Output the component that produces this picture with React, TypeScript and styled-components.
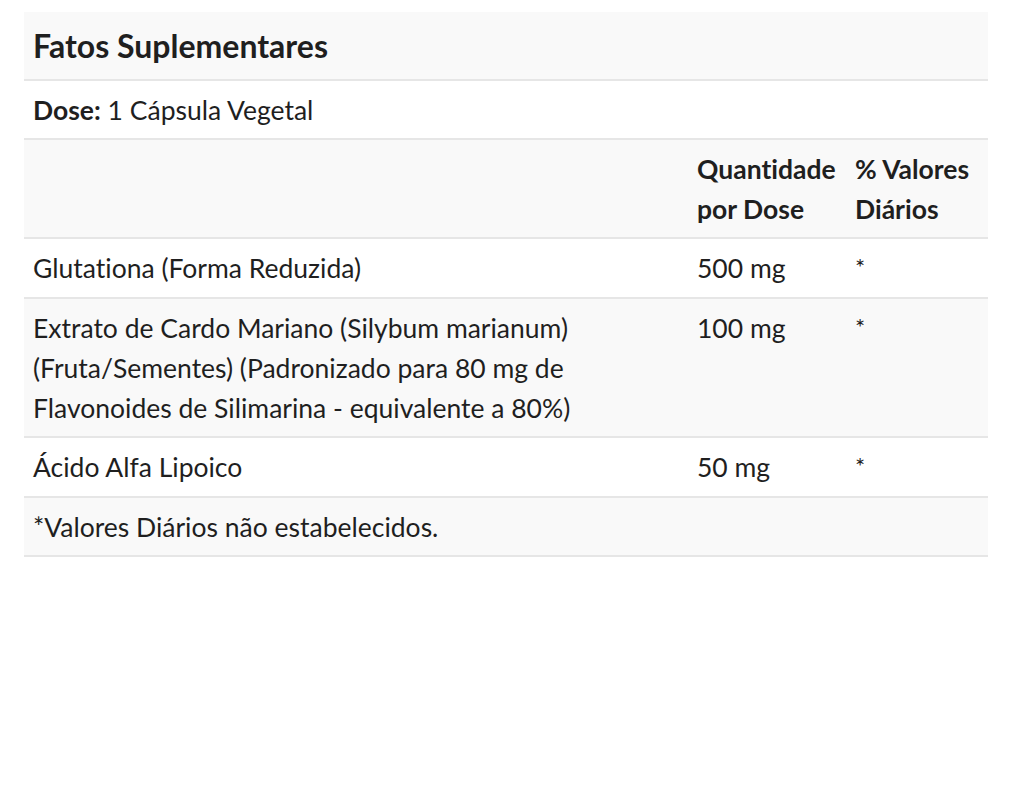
import React from "react";
import styled, { createGlobalStyle } from "styled-components";

const GlobalStyle = createGlobalStyle`
  body {
    margin: 0;
    background: #ffffff;
    font-family: Lato, "Open Sans", sans-serif;
    color: #1f1f1f;
    font-variant-ligatures: none;
  }
`;

interface Ingredient {
  name: string;
  amount: string;
  dv: string;
}

const ingredients: Ingredient[] = [
  { name: "Glutationa (Forma Reduzida)", amount: "500 mg", dv: "*" },
  {
    name: "Extrato de Cardo Mariano (Silybum marianum) (Fruta/Sementes) (Padronizado para 80 mg de Flavonoides de Silimarina - equivalente a 80%)",
    amount: "100 mg",
    dv: "*",
  },
  { name: "Ácido Alfa Lipoico", amount: "50 mg", dv: "*" },
];

const Page = styled.div`
  padding: 12px 35px 0 24px;
`;

const Facts = styled.table`
  width: 964px;
  border-collapse: collapse;
  font-size: 26.5px;
  line-height: 40px;
`;

const Row = styled.tr<{ $shade?: boolean }>`
  border-bottom: 2px solid #e6e6e6;
  background: ${(p) => (p.$shade ? "#f9f9f9" : "#ffffff")};
`;

const Title = styled.th`
  text-align: left;
  font-weight: 700;
  font-size: 32px;
  padding: 14px 9px 13px;
`;

const Cell = styled.td<{ $w?: number; $bold?: boolean }>`
  vertical-align: top;
  padding: 9px 9px 8px;
  width: ${(p) => (p.$w ? `${p.$w}px` : "auto")};
  font-weight: ${(p) => (p.$bold ? 700 : 400)};
`;

const Label = styled.b`
  font-weight: 700;
`;

const Star = styled.span`
  font-size: 24px;
  position: relative;
  top: -2px;
`;

export default function App() {
  return (
    <Page>
      <GlobalStyle />
      <Facts>
        <tbody>
          <Row $shade>
            <Title colSpan={3}>Fatos Suplementares</Title>
          </Row>
          <Row>
            <Cell colSpan={3}>
              <Label>Dose:</Label> 1 Cápsula Vegetal
            </Cell>
          </Row>
          <Row $shade>
            <Cell />
            <Cell $w={140} $bold>
              Quantidade por Dose
            </Cell>
            <Cell $w={124} $bold>
              % Valores Diários
            </Cell>
          </Row>
          {ingredients.map((ing, i) => (
            <Row key={ing.name} $shade={i % 2 === 1}>
              <Cell>{ing.name}</Cell>
              <Cell>{ing.amount}</Cell>
              <Cell>
                <Star>{ing.dv}</Star>
              </Cell>
            </Row>
          ))}
          <Row $shade>
            <Cell colSpan={3}>*Valores Diários não estabelecidos.</Cell>
          </Row>
        </tbody>
      </Facts>
    </Page>
  );
}
